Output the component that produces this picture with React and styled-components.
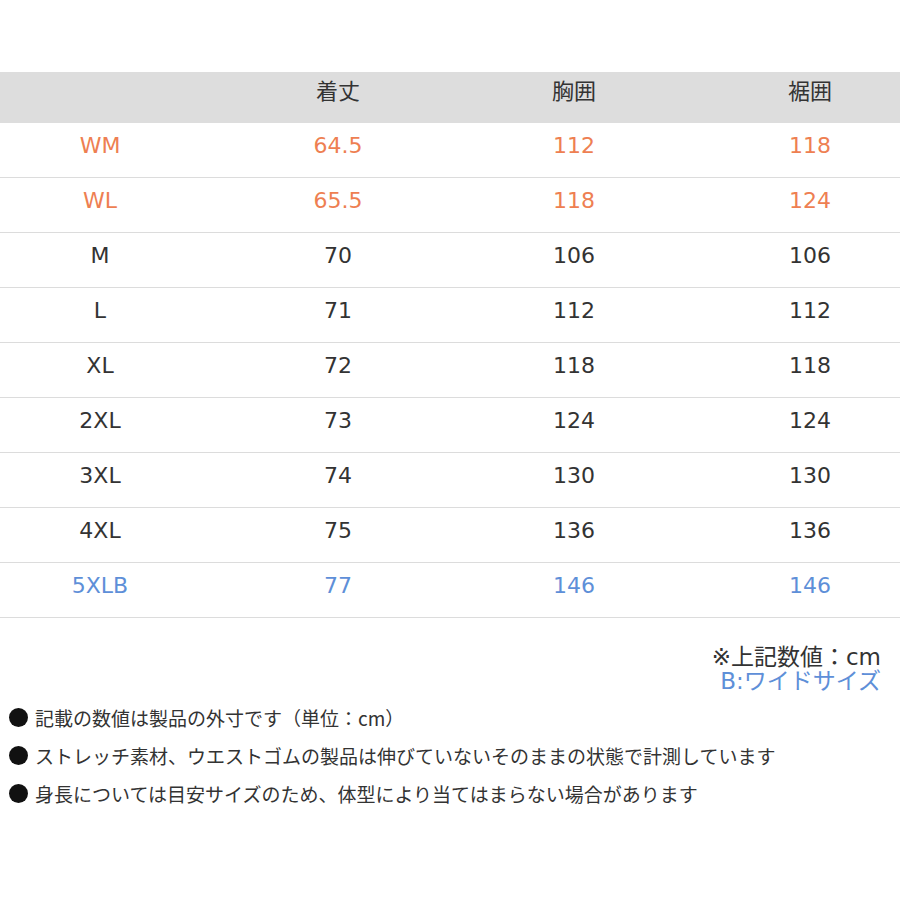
import React from 'react';
import styled, { createGlobalStyle } from 'styled-components';

const GlobalStyle = createGlobalStyle`
  html, body {
    margin: 0;
    padding: 0;
    background: #fff;
    overflow-x: hidden;
  }
  body {
    font-family: "DejaVu Sans", "Noto Sans CJK JP", sans-serif;
    color: #333;
  }
`;

const colors = {
  orange: '#ee7f52',
  blue: '#5e8fd8',
  text: '#333333',
};

const Page = styled.div`
  width: 900px;
  height: 900px;
  overflow: hidden;
  padding-top: 72px;
  box-sizing: border-box;
`;

const Table = styled.div`
  width: 948px;
  display: grid;
  grid-template-columns: 200px 276px 196px 276px;
`;

const HeadCell = styled.div`
  height: 51px;
  background: #dddddd;
  display: flex;
  align-items: center;
  justify-content: center;
  font-family: "Noto Sans CJK JP", sans-serif;
  font-size: 22px;
  color: #333;
  padding-bottom: 18px;
  box-sizing: border-box;
`;

const Cell = styled.div`
  height: 55px;
  border-bottom: 1px solid #dcdcdc;
  box-sizing: border-box;
  display: flex;
  align-items: center;
  justify-content: center;
  font-size: 22px;
  padding-bottom: 10px;
  color: ${(p) => (p.$tone ? colors[p.$tone] : colors.text)};
`;

const Notes = styled.div`
  display: flex;
  flex-direction: column;
  align-items: flex-end;
  padding: 27px 19px 0 0;
  font-family: "DejaVu Sans", "Noto Sans CJK JP", sans-serif;
  font-size: 23px;
  line-height: 24px;
`;

const Note = styled.div`
  color: ${(p) => (p.$tone ? colors[p.$tone] : colors.text)};
`;

const Bullets = styled.ul`
  list-style: none;
  margin: 10px 0 0;
  padding: 0 0 0 9px;
  display: flex;
  flex-direction: column;
  gap: 9px;
`;

const Bullet = styled.li`
  display: flex;
  align-items: center;
  gap: 7px;
  font-family: "Noto Sans CJK JP", sans-serif;
  font-size: 19px;
  line-height: 29px;
  color: #333;
`;

const Dot = styled.span`
  width: 19px;
  height: 19px;
  border-radius: 50%;
  background: #111;
  flex-shrink: 0;
`;

const rows = [
  ['WM', '64.5', '112', '118', 'orange'],
  ['WL', '65.5', '118', '124', 'orange'],
  ['M', '70', '106', '106'],
  ['L', '71', '112', '112'],
  ['XL', '72', '118', '118'],
  ['2XL', '73', '124', '124'],
  ['3XL', '74', '130', '130'],
  ['4XL', '75', '136', '136'],
  ['5XLB', '77', '146', '146', 'blue'],
];

const notes = [
  '記載の数値は製品の外寸です（単位：cm）',
  'ストレッチ素材、ウエストゴムの製品は伸びていないそのままの状態で計測しています',
  '身長については目安サイズのため、体型により当てはまらない場合があります',
];

const App = () => {
  return (
    <Page>
      <GlobalStyle />
      <Table>
        <HeadCell />
        <HeadCell>着丈</HeadCell>
        <HeadCell>胸囲</HeadCell>
        <HeadCell>裾囲</HeadCell>
        {rows.map(([size, a, b, c, tone]) => (
          <React.Fragment key={size}>
            <Cell $tone={tone}>{size}</Cell>
            <Cell $tone={tone}>{a}</Cell>
            <Cell $tone={tone}>{b}</Cell>
            <Cell $tone={tone}>{c}</Cell>
          </React.Fragment>
        ))}
      </Table>
      <Notes>
        <Note>※上記数値：cm</Note>
        <Note $tone="blue">B:ワイドサイズ</Note>
      </Notes>
      <Bullets>
        {notes.map((n) => (
          <Bullet key={n}>
            <Dot />
            {n}
          </Bullet>
        ))}
      </Bullets>
    </Page>
  );
};

export default App;
